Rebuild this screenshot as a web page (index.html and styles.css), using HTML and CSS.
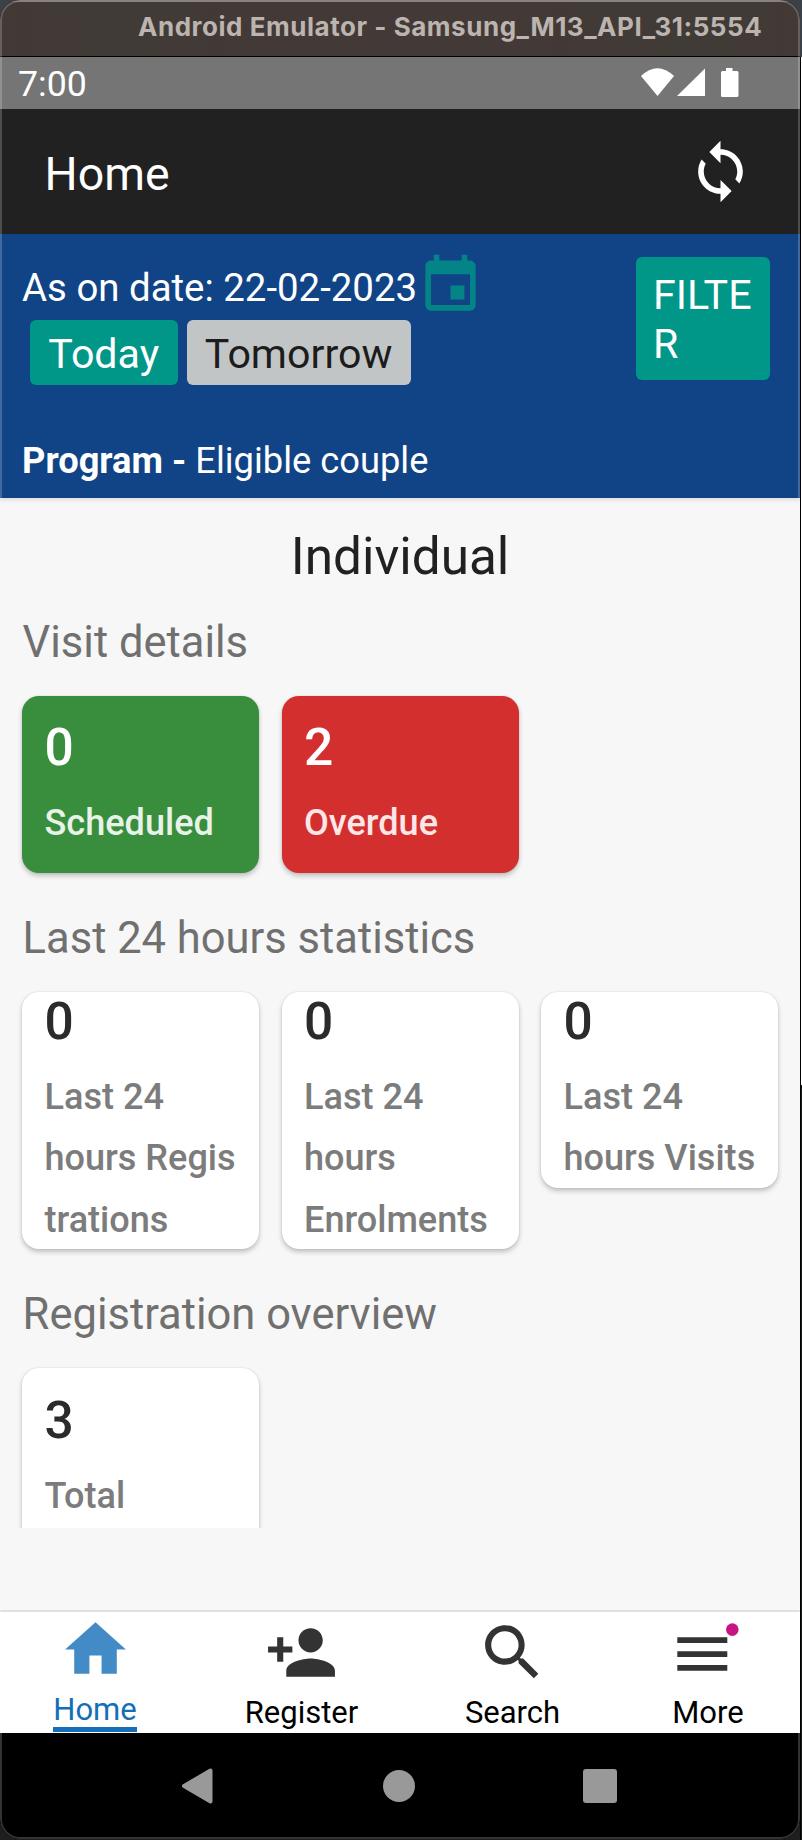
FILE: index.html
```html
<!DOCTYPE html>
<html lang="en">
<head>
<meta charset="utf-8">
<title>Home</title>
<link rel="stylesheet" href="styles.css">
</head>
<body>
<div class="desktop">
<div class="window">
  <header class="titlebar">Android Emulator - Samsung_M13_API_31:5554</header>
  <div class="statusbar">
    <span>7:00</span>
    <svg class="status-icons" viewBox="0 0 98 29" width="98" height="29">
      <path d="M0 8Q16.500-7.500 33 8L16.500 28Z"/>
      <path d="M36 28L64 .5V28Z"/>
      <path d="M85 0h6.500v3H96q1.500 0 1.500 1.500v23Q97.500 29 96 29H81.500Q80 29 80 27.500v-23Q80 3 81.500 3H85Z"/>
    </svg>
  </div>
  <div class="appbar">
    <h1 class="appbar-title">Home</h1>
    <svg width="67" height="67" viewBox="0 0 24 24" fill="#fff"><path d="M12 4V1L8 5l4 4V6c3.310 0 6 2.690 6 6 0 1.010-.25 1.970-.7 2.800l1.460 1.460C19.540 15.030 20 13.570 20 12c0-4.420-3.580-8-8-8zm0 14c-3.310 0-6-2.690-6-6 0-1.010.25-1.970.7-2.800L5.240 7.740C4.460 8.970 4 10.430 4 12c0 4.420 3.580 8 8 8v3l4-4-4-4v3z"/></svg>
  </div>
  <section class="filters">
    <div class="filters-top">
      <div>
        <div class="date-row">
          <span>As on date: 22-02-2023</span>
          <svg width="67" height="67" viewBox="0 0 24 24" fill="#058488"><path d="M17 12h-5v5h5v-5zM16 1v2H8V1H6v2H5c-1.110 0-1.990.9-1.990 2L3 19c0 1.100.89 2 2 2h14c1.100 0 2-.9 2-2V5c0-1.100-.9-2-2-2h-1V1h-2zm3 18H5V8h14v11z"/></svg>
        </div>
        <div class="day-row">
          <button class="btn btn-on">Today</button>
          <button class="btn btn-off">Tomorrow</button>
        </div>
      </div>
      <button class="btn btn-on btn-filter">FILTE<br>R</button>
    </div>
    <p class="program"><b>Program - </b>Eligible couple</p>
  </section>
  <main class="content">
    <h2 class="content-title">Individual</h2>
    <h3 class="group-title">Visit details</h3>
    <div class="cards">
      <div class="card card-roomy green"><b class="num">0</b><span class="label">Scheduled</span></div>
      <div class="card card-roomy red"><b class="num">2</b><span class="label">Overdue</span></div>
    </div>
    <h3 class="group-title">Last 24 hours statistics</h3>
    <div class="cards">
      <div class="card"><b class="num">0</b><span class="label">Last 24<br>hours Regis<br>trations</span></div>
      <div class="card"><b class="num">0</b><span class="label">Last 24<br>hours<br>Enrolments</span></div>
      <div class="card"><b class="num">0</b><span class="label">Last 24<br>hours Visits</span></div>
    </div>
    <h3 class="group-title">Registration overview</h3>
    <div class="cards">
      <div class="card card-roomy"><b class="num">3</b><span class="label">Total</span></div>
    </div>
  </main>
  <nav class="tabs">
    <a class="tab tab-active"><svg width="73" height="73" viewBox="0 0 24 24"><path d="M10 20v-6h4v6h5v-8h3L12 3 2 12h3v8z"/></svg><span>Home</span></a>
    <a class="tab"><svg width="73" height="73" viewBox="0 0 24 24"><path d="M15 12c2.210 0 4-1.790 4-4s-1.790-4-4-4-4 1.790-4 4 1.790 4 4 4zm-9-2V7H4v3H1v2h3v3h2v-3h3v-2H6zm9 4c-2.670 0-8 1.340-8 4v2h16v-2c0-2.660-5.330-4-8-4z"/></svg><span>Register</span></a>
    <a class="tab"><svg width="73" height="73" viewBox="0 0 24 24"><path d="M15.500 14h-.79l-.28-.27C15.410 12.590 16 11.110 16 9.500 16 5.910 13.090 3 9.500 3S3 5.910 3 9.500 5.910 16 9.500 16c1.610 0 3.090-.59 4.230-1.570l.27.28v.79l5 4.990L20.490 19l-4.990-5zm-6 0C7.010 14 5 11.990 5 9.500S7.010 5 9.500 5 14 7.010 14 9.500 11.990 14 9.500 14z"/></svg><span>Search</span></a>
    <a class="tab tab-more"><svg width="73" height="73" viewBox="0 0 73 73"><path d="M5.300 21.300h50v5.700h-50zM5.300 35.200h50v5.700h-50zM5.300 49.100h50v5.700h-50z"/><circle class="dot" cx="60.300" cy="13.600" r="6.300"/></svg><span>More</span></a>
  </nav>
  <div class="navbar">
    <svg width="34" height="38" viewBox="0 0 34 38"><path d="M3 19L29.500 3.500V34.500Z" stroke="#999" stroke-width="4" stroke-linejoin="round"/></svg>
    <svg width="34" height="34" viewBox="0 0 34 34"><circle cx="17" cy="17" r="16"/></svg>
    <svg width="34" height="34" viewBox="0 0 34 34"><rect width="34" height="34" rx="3"/></svg>
  </div>
</div>
<div class="behind"></div>
</div>
</body>
</html>
```
FILE: styles.css
```css
* { box-sizing: border-box; }
body {
  margin: 0;
  width: 802px;
  height: 1840px;
  overflow: hidden;
  background: linear-gradient(#3a4247 0 60px, #1c1e1f 60px 100%);
  font-family: Roboto, "Liberation Sans", sans-serif;
}
h1, h2, h3, p { margin: 0; font-weight: 400; }
svg { display: block; flex: none; }
.desktop { display: flex; width: 802px; height: 1840px; }
.window {
  position: relative;
  width: 800px;
  height: 1839px;
  border-radius: 20px;
  overflow: hidden;
  display: flex;
  flex-direction: column;
  background: #000;
}
.window::after {
  content: "";
  position: absolute;
  inset: 0;
  border: 2px solid rgba(255, 255, 255, .2);
  border-radius: 20px;
}
.behind {
  width: 2px;
  margin-top: 57px;
  background: linear-gradient(#fff 0 1028px, #17191a 1028px 100%);
  border-left: 1px solid #000;
}
.titlebar {
  height: 57px;
  padding-left: 138px;
  border-top: 2px solid #6b6461;
  border-bottom: 1px solid #000;
  background: linear-gradient(90deg, #433936, #403b36 15%, #433936 30% 65%, #403b36 88%, #433936);
  color: #bbb4af;
  font: 700 26px/50px Inter, sans-serif;
  letter-spacing: .53px;
  white-space: nowrap;
}
.statusbar {
  height: 52px;
  display: flex;
  justify-content: space-between;
  padding: 0 61px 0 18px;
  background: #757575;
  color: #fff;
  font-size: 35.700px;
  line-height: 55px;
}
.status-icons { margin-top: 11px; fill: #fff; }
.appbar {
  height: 125px;
  display: flex;
  justify-content: space-between;
  padding: 29px 46.500px 0 44.500px;
  background: #212121;
}
.appbar-title { color: #fff; font-size: 46.500px; line-height: 72px; }
.filters {
  height: 264px;
  padding: 18px 30px 0 22px;
  background: #114486;
  color: #fff;
}
.filters-top { display: flex; justify-content: space-between; align-items: flex-start; }
.date-row { display: flex; height: 68px; font-size: 38.400px; line-height: 71px; white-space: nowrap; }
.date-row span { width: 394.500px; }
.day-row { display: flex; gap: 9px; padding-left: 8px; }
.btn {
  border: 0;
  border-radius: 6px;
  padding: 0 18.300px;
  height: 65px;
  font: 400 41.200px/69px Roboto, sans-serif;
  white-space: nowrap;
}
.btn-on { background: #009688; color: #fff; }
.btn-off { background: #c2c5c6; color: #1c1c1c; }
.btn-filter { width: 134px; height: 123px; margin-top: 5px; padding: 3px 0 0 17px; line-height: 49px; text-align: left; }
.program { margin-top: 53px; font-size: 36.300px; line-height: 45px; white-space: pre; }
.program b { font-weight: 700; }
.content {
  height: 1030px;
  margin-bottom: 82px;
  padding: 0 22px;
  background: #f7f7f7;
  box-shadow: 0 82px #f7f7f7, inset 0 4px 4px -2px #ddd;
  overflow: hidden;
}
.content-title { height: 120px; line-height: 118px; font-size: 51.300px; text-align: center; color: #212121; }
.group-title { height: 77.500px; line-height: 49px; font-size: 43.500px; color: #707070; padding-left: .6px; }
.cards { display: flex; gap: 22.500px; align-items: flex-start; }
.cards + .group-title { height: 119px; line-height: 132px; }
.card {
  width: 237px;
  padding: 0 0 0 22.500px;
  border-radius: 17px;
  background: #fff;
  color: #2b2b2b;
  box-shadow: 0 3px 5px rgba(0, 0, 0, .22), 0 0 2px rgba(0, 0, 0, .12);
  white-space: nowrap;
}
.card-roomy { padding: 22.500px 0 18.300px 22.500px; }
.num { display: block; height: 75px; line-height: 59px; font-size: 51.500px; font-weight: 500; }
.label { display: block; line-height: 61.600px; font-size: 36.100px; font-weight: 500; color: #7c7c7c; margin-bottom: -2.500px; }
.card-roomy .label { margin-bottom: 0; }
.green { background: #388e3c; color: #fff; }
.red { background: #d32f2f; color: #fff; }
.green .label { color: #e8f2e8; }
.red .label { color: #fce6e6; }
.tabs {
  position: relative;
  height: 123px;
  display: grid;
  grid-template-columns: 190px 223px 199px 188px;
  border-top: 2px solid #e0e0e0;
  background: #fff;
}
.tab {
  display: flex;
  flex-direction: column;
  align-items: center;
  padding-top: 4px;
  font-size: 31px;
  line-height: 38px;
  color: #000;
}
.tab svg { fill: #333; }
.tab span { margin-top: 5px; }
.tab-active { padding-top: 1px; color: #146eb8; }
.tab-active svg { fill: #428bc6; }
.tab-active span { height: 41px; border-bottom: 5px solid #146eb8; }
.tab-more { padding-left: 4px; }
.tab .dot { fill: #c71585; }
.navbar {
  height: 106px;
  display: flex;
  gap: 167px;
  padding-left: 181px;
  align-items: center;
  background: #000;
}
.navbar svg { fill: #999; }
```
